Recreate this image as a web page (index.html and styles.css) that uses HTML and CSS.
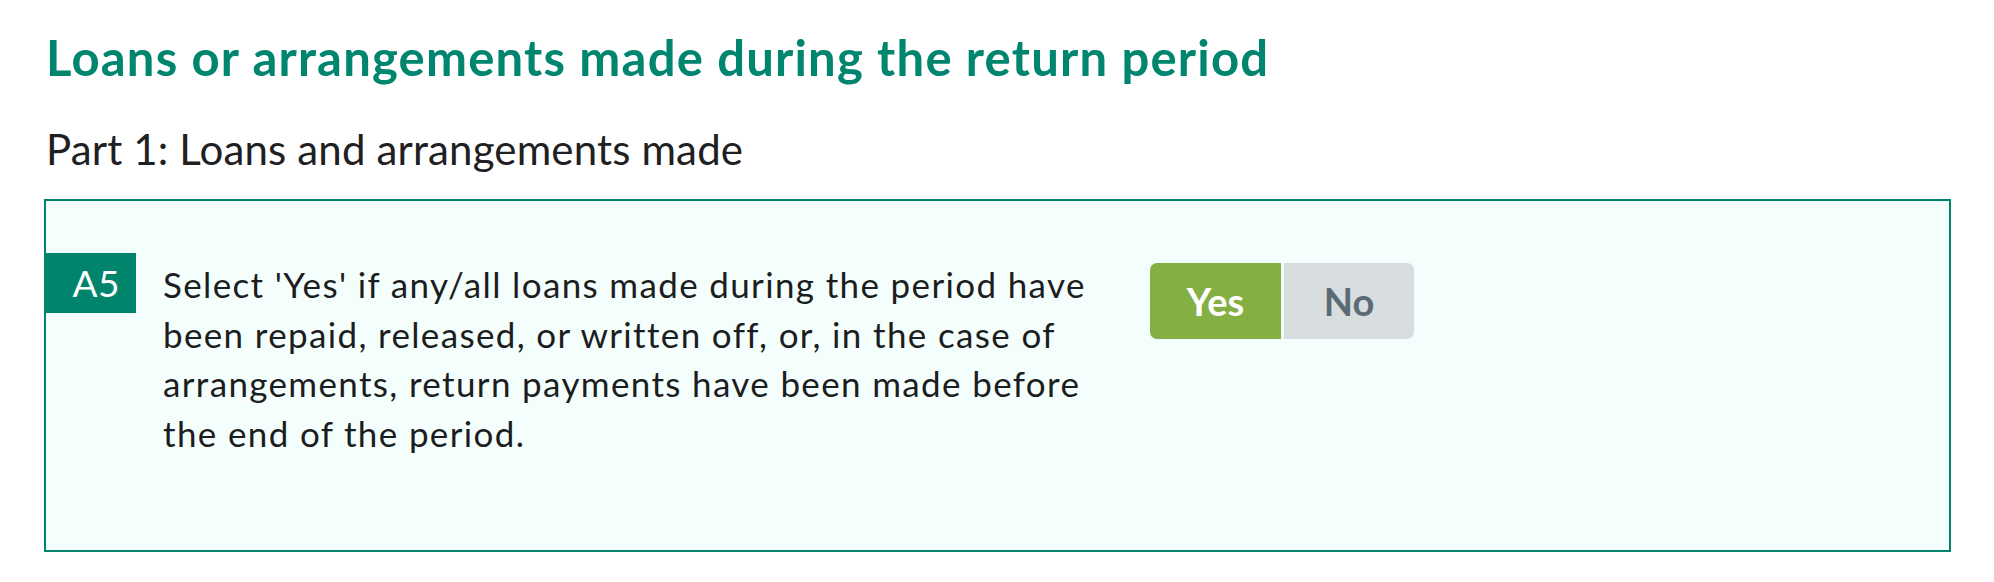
FILE: index.html
```html
<!DOCTYPE html>
<html lang="en">
<head>
<meta charset="utf-8">
<title>Loans or arrangements</title>
<link rel="stylesheet" href="styles.css">
</head>
<body>
<main class="page">
  <h1 class="title">Loans or arrangements made during the return period</h1>
  <h2 class="subtitle">Part 1: Loans and arrangements made</h2>
  <section class="panel">
    <div class="question">
      <div class="badge">A5</div>
      <p class="question-text">Select 'Yes' if any/all loans made during the period have been repaid, released, or written off, or, in the case of arrangements, return payments have been made before the end of the period.</p>
      <div class="toggle">
        <button class="toggle-btn yes" type="button">Yes</button>
        <button class="toggle-btn no" type="button">No</button>
      </div>
    </div>
  </section>
</main>
</body>
</html>
```

FILE: styles.css
```css
* { box-sizing: border-box; }
html, body { margin: 0; padding: 0; background: #ffffff; }
body {
  font-family: "Lato", "Liberation Sans", sans-serif;
  color: #1f2022;
}
.page {
  padding: 0 43px 0 44px;
  overflow: hidden;
}
.title {
  margin: 28px 0 0 2px;
  font-size: 49px;
  line-height: 1.2;
  font-weight: 700;
  letter-spacing: 1.2px;
  color: #00856e;
}
.subtitle {
  margin: 37px 0 0 2px;
  font-size: 42px;
  line-height: 1.2;
  font-weight: 400;
  letter-spacing: 0.15px;
  color: #1f2022;
}
.panel {
  margin-top: 25px;
  border: 2px solid #00846c;
  background: #f4fffd;
  padding: 52px 0 92px 0;
}
.question {
  display: flex;
  align-items: flex-start;
}
.badge {
  margin-left: -2px;
  width: 92px;
  height: 60px;
  background: #00856c;
  color: #ffffff;
  font-size: 37px;
  line-height: 60px;
  letter-spacing: 0.5px;
  text-align: right;
  padding-right: 16px;
}
.question-text {
  margin: 7px 0 0 27px;
  width: 950px;
  font-size: 35px;
  line-height: 49.5px;
  letter-spacing: 1.35px;
  color: #1c1d20;
}
.toggle {
  display: flex;
  gap: 3px;
  margin: 10px 0 0 37px;
}
.toggle-btn {
  border: 0;
  height: 76px;
  width: 131px;
  font-family: "Lato", "Liberation Sans", sans-serif;
  font-weight: 700;
  font-size: 38px;
  padding: 0;
}
.toggle-btn.yes {
  background: #84b043;
  color: #ffffff;
  border-radius: 7px 0 0 7px;
}
.toggle-btn.no {
  width: 130px;
  background: #d8dde0;
  color: #5b6b75;
  border-radius: 0 7px 7px 0;
}
```
